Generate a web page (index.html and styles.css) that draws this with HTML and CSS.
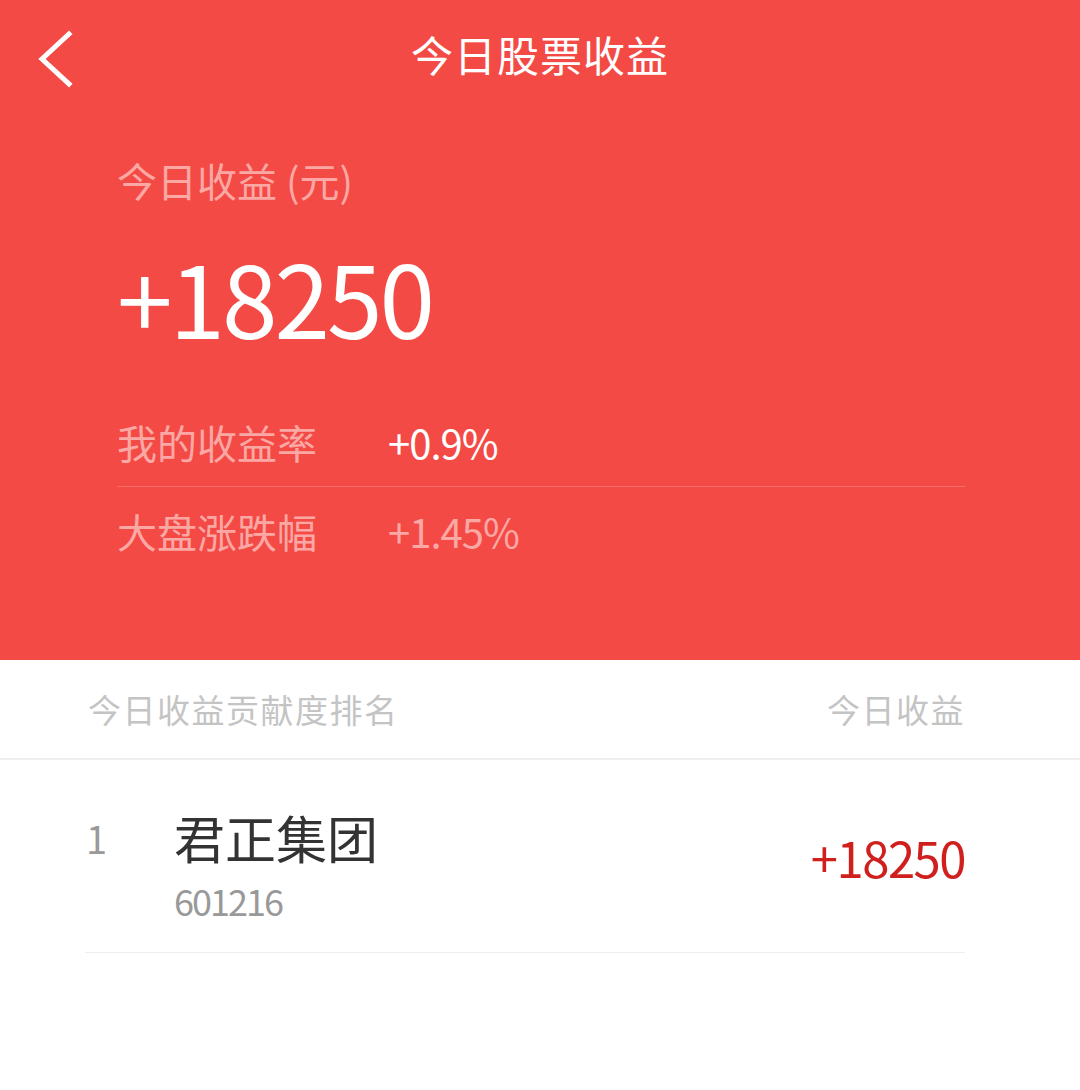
FILE: index.html
```html
<!DOCTYPE html>
<html lang="zh-CN">
<head>
    <meta charset="UTF-8">
    <meta name="viewport" content="width=device-width, initial-scale=1.0">
    <title>今日股票收益</title>
    <link rel="stylesheet" href="styles.css">
</head>
<body>
    <!-- 顶部红色区域 -->
    <div class="top">
        <div class="nav-bar">
            <span class="back">
                <svg width="40" height="60" viewBox="0 0 40 60">
                    <polyline points="33,6 6,31 33,56" fill="none" stroke="#fff" stroke-width="5" stroke-linecap="square"/>
                </svg>
            </span>
            <h1 class="nav-title">今日股票收益</h1>
        </div>

        <div class="summary">
            <div class="summary-label">今日收益 (元)</div>
            <div class="summary-value">+18250</div>

            <div class="stat-row">
                <span class="stat-name">我的收益率</span>
                <span class="stat-value">+0.9%</span>
            </div>
            <div class="stat-row">
                <span class="stat-name">大盘涨跌幅</span>
                <span class="stat-value dim">+1.45%</span>
            </div>
        </div>
    </div>

    <!-- 排名列表 -->
    <div class="rank">
        <div class="rank-head">
            <span>今日收益贡献度排名</span>
            <span>今日收益</span>
        </div>
        <div class="rank-item">
            <span class="rank-no">1</span>
            <div class="rank-info">
                <div class="stock-name">君正集团</div>
                <div class="stock-code">601216</div>
            </div>
            <span class="rank-amount">+18250</span>
        </div>
    </div>
</body>
</html>
```

FILE: styles.css
```css
/* 基础样式 */
body {
    margin: 0;
    font-family: "Noto Sans CJK SC", "Noto Sans", sans-serif;
    background: #fff;
    color: #333;
}

/* 顶部红色区域 */
.top {
    background-color: #f44a46;
    height: 660px;
    color: #fff;
}

.nav-bar {
    position: relative;
    height: 106px;
    display: flex;
    align-items: center;
    justify-content: center;
}

.back {
    position: absolute;
    left: 36px;
    top: 28px;
}

.nav-title {
    margin: 0;
    font-size: 42px;
    font-weight: normal;
    letter-spacing: 1px;
}

.summary {
    padding: 44px 115px 0 117px;
}

.summary-label {
    font-size: 40px;
    line-height: 60px;
}

.summary-label,
.stat-name,
.stat-value.dim {
    color: #fba8a5;
}

.summary-value {
    font-size: 100px;
    line-height: 120px;
    letter-spacing: -3px;
    margin: 26px 0 42px 0;
}

.stat-row {
    display: flex;
    align-items: center;
    height: 88px;
}

.stat-row + .stat-row {
    border-top: 1px solid #f76a66;
}

.stat-name {
    width: 271px;
    font-size: 40px;
}

.stat-value {
    font-size: 40px;
    letter-spacing: -1px;
}

/* 排名列表 */
.rank-head {
    display: flex;
    justify-content: space-between;
    align-items: center;
    height: 98px;
    padding: 0 115px 0 88px;
    border-bottom: 2px solid #eee;
    font-size: 33px;
    color: #c4c4c4;
    letter-spacing: 1.5px;
}

.rank-item {
    display: flex;
    align-items: center;
    margin: 0 115px 0 85px;
    height: 192px;
    border-bottom: 1px solid #eee;
}

.rank-no {
    width: 88px;
    padding-left: 1px;
    font-size: 38px;
    color: #999;
    align-self: flex-start;
    margin-top: 50px;
}

.rank-info {
    flex: 1;
    padding-top: 20px;
}

.stock-name {
    font-size: 51px;
    line-height: 60px;
    color: #333;
}

.stock-code {
    font-size: 36px;
    line-height: 50px;
    color: #999;
    letter-spacing: -2px;
    margin-top: 8px;
}

.rank-amount {
    font-size: 49px;
    color: #d0201e;
    letter-spacing: -1.5px;
}
```
